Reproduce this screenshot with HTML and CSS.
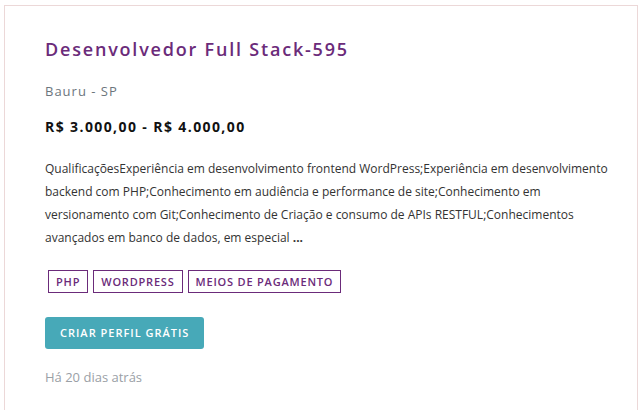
FILE: index.html
```html
<!DOCTYPE html>
<html lang="pt-BR">
<head>
<meta charset="utf-8">
<title>Vaga</title>
<link rel="stylesheet" href="styles.css">
</head>
<body>
<div class="card">
  <h2 class="title">Desenvolvedor Full Stack-595</h2>
  <p class="location">Bauru - SP</p>
  <p class="salary">R$ 3.000,00 - R$ 4.000,00</p>
  <p class="desc">QualificaçõesExperiência em desenvolvimento frontend WordPress;Experiência em desenvolvimento backend com PHP;Conhecimento em audiência e performance de site;Conhecimento em versionamento com Git;Conhecimento de Criação e consumo de APIs RESTFUL;Conhecimentos avançados em banco de dados, em especial <b>...</b></p>
  <div class="tags">
    <span class="tag">PHP</span>
    <span class="tag">WordPress</span>
    <span class="tag">Meios de pagamento</span>
  </div>
  <a class="btn">Criar perfil grátis</a>
  <p class="date">Há 20 dias atrás</p>
</div>
</body>
</html>
```
FILE: styles.css
```css
html, body { background: #fff; }
body {
  margin: 5px 0 0 4px;
  font-family: "Open Sans", "Noto Sans", sans-serif;
}
.card {
  width: 634px;
  height: 440px;
  border: 1px solid #ecd8d8;
  padding: 30px 20px 0 40px;
  box-sizing: border-box;
}
.title {
  margin: 0;
  font-size: 18px;
  font-weight: 600;
  letter-spacing: 1.8px;
  line-height: 26px;
  color: #6b2b7a;
}
.location {
  margin: 19px 0 0;
  font-size: 13px;
  letter-spacing: 1px;
  line-height: 20px;
  color: #6c757d;
}
.salary {
  margin: 16px 0 0;
  font-size: 14px;
  font-weight: 700;
  letter-spacing: 1.4px;
  line-height: 20px;
  color: #111;
}
.desc {
  margin: 20px 0 0;
  font-size: 12px;
  line-height: 23px;
  color: #333;
}
.desc b { font-weight: 700; }
.tags {
  margin: 21px 0 0 3px;
  display: flex;
  gap: 5px;
}
.tag {
  border: 1px solid #6b2b7a;
  color: #6b2b7a;
  font-size: 11px;
  font-weight: 600;
  letter-spacing: 0.8px;
  text-transform: uppercase;
  line-height: 21px;
  padding: 0 7px;
}
.btn {
  display: inline-block;
  margin-top: 24px;
  background: #47a9b8;
  color: #fff;
  border-radius: 3px;
  font-size: 11px;
  font-weight: 600;
  letter-spacing: 1px;
  text-transform: uppercase;
  line-height: 32px;
  padding: 0 15px;
}
.date {
  margin: 18px 0 0;
  font-size: 13px;
  line-height: 20px;
  color: #9aa0a6;
}
```
